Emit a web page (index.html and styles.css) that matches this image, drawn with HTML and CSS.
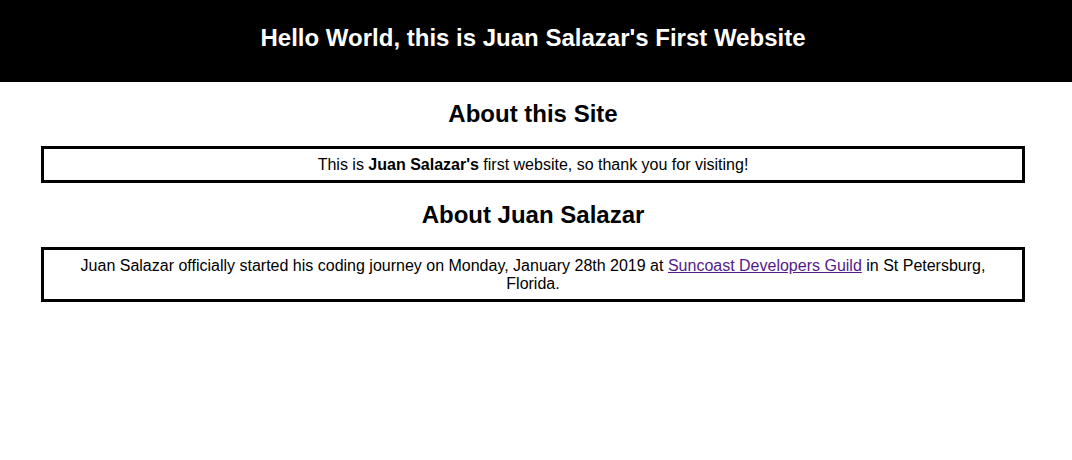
FILE: index.html
```html
<!DOCTYPE html>
<html lang="en">
<head>
<meta charset="utf-8">
<title>Juan Salazar's First Website</title>
<link rel="stylesheet" href="styles.css">
</head>
<body>
<header class="site-header">
  <h1 class="site-title">Hello World, this is Juan Salazar's First Website</h1>
</header>
<main class="content">
  <h2 class="section-title">About this Site</h2>
  <section class="box">
    <p class="box-text">This is <strong>Juan Salazar's</strong> first website, so thank you for visiting!</p>
  </section>
  <h2 class="section-title">About Juan Salazar</h2>
  <section class="box">
    <p class="box-text">Juan Salazar officially started his coding journey on Monday, January 28th 2019 at <a class="link" href="#">Suncoast Developers Guild</a> in St Petersburg, Florida.</p>
  </section>
</main>
</body>
</html>
```
FILE: styles.css
```css
html, body {
  margin: 0;
  padding: 0;
  background: #ffffff;
  color: #000000;
  font-family: "Liberation Sans", Arial, sans-serif;
}

.site-header {
  background: #000000;
  padding: 24px 6px 30px 0;
}

.site-title {
  margin: 0;
  color: #ffffff;
  font-size: 24px;
  line-height: 28px;
  font-weight: bold;
  text-align: center;
}

.content {
  display: flex;
  flex-direction: column;
  padding: 0 47px 0 41px;
}

.section-title {
  margin: 18px 0 18px;
  font-size: 24px;
  line-height: 28px;
  font-weight: bold;
  text-align: center;
}

.box {
  border: 3px solid #000000;
  padding: 7px 8px 6px;
}

.box-text {
  margin: 0;
  font-size: 16px;
  line-height: 18px;
  text-align: center;
}

.link {
  color: #551a8b;
  text-decoration: underline;
}
```
